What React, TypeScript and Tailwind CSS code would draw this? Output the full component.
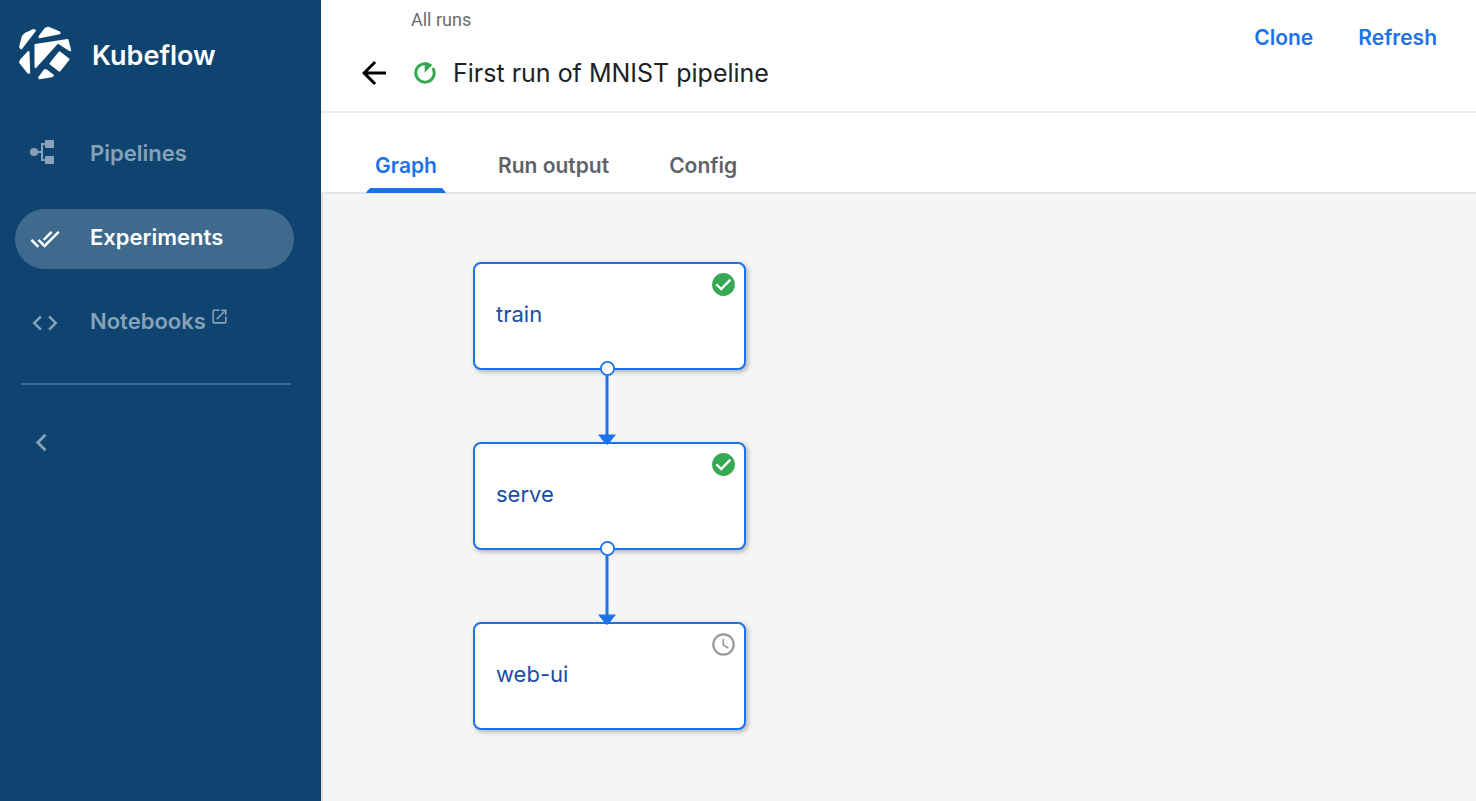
import React from "react";
import type { ReactNode } from "react";
import { MdArrowBack, MdChevronLeft, MdCode, MdDoneAll, MdOpenInNew } from "react-icons/md";

function Logo() {
  return (
    <svg
      className="h-[54px] w-[53px] fill-white stroke-white"
      viewBox="60 49 158 162"
      strokeWidth="6"
      strokeLinejoin="round"
      aria-hidden="true"
    >
      <path d="M63 112 L71 80 L78 73 L104 61 L107 63 L66 116 Z" />
      <path d="M121 81 L139 57 L147 54 L181 68 L181 71 L121 83 Z" />
      <path d="M109 106 L205 91 L213 122 L176 98 L109 172 Z" />
      <path d="M181 128 L208 149 L181 183 L154 162 Z" />
      <path d="M88 127 L90 189 L87 189 L63 158 L64 153 Z" />
      <path d="M136 182 L141 182 L161 197 L158 200 L121 206 L120 204 Z" />
    </svg>
  );
}

function PipelineIcon() {
  return (
    <svg className="h-6 w-6" viewBox="0 0 24 24" aria-hidden="true">
      <circle cx="4" cy="12" r="4" fill="currentColor" />
      <rect x="15" y="0" width="9" height="8" rx="0.6" fill="currentColor" />
      <rect x="15" y="16" width="9" height="8" rx="0.6" fill="currentColor" />
      <path d="M7 12 H12 M16 4 H12 V20 H16" fill="none" stroke="currentColor" strokeWidth="2" />
    </svg>
  );
}

function RunningIcon() {
  return (
    <svg className="h-[22px] w-[22px]" viewBox="0 0 22 22" role="img" aria-label="Running">
      <path d="M18.7 6 A9.2 9.2 0 1 1 14.6 2.5" fill="none" stroke="#34a853" strokeWidth="3" />
      <path d="M10.7 0.3 C13.6 0.3 16.2 1.2 18.3 3 L10.7 10.8 Z" fill="#34a853" />
    </svg>
  );
}

function DoneIcon() {
  return (
    <svg className="h-[23px] w-[23px]" viewBox="0 0 23 23" role="img" aria-label="Succeeded">
      <circle cx="11.5" cy="11.5" r="11.4" fill="#34a853" />
      <path d="M4.3 11.2 L9.2 16 L18.4 6.6" fill="none" stroke="#fff" strokeWidth="2.3" />
    </svg>
  );
}

function PendingIcon() {
  return (
    <svg className="h-[23px] w-[23px]" viewBox="0 0 23 23" fill="none" stroke="#9a9a9a" role="img" aria-label="Pending">
      <circle cx="11.5" cy="11.5" r="10.2" strokeWidth="2.2" />
      <path d="M11.3 5.8 V12 L16.3 15" strokeWidth="1.6" />
    </svg>
  );
}

function Connector() {
  return (
    <svg className="relative z-10 -mt-[9px] -mb-[3px] ml-[125px] h-[84px] w-[18px]" viewBox="0 0 18 84" aria-hidden="true">
      <path d="M9 15 V76" stroke="#1a73e8" strokeWidth="3" />
      <path d="M0 73.5 H18 L10.5 83 Q9 84.6 7.5 83 Z" fill="#1a73e8" />
      <circle cx="9.5" cy="7.5" r="6.6" fill="#fff" stroke="#1a73e8" strokeWidth="1.8" />
    </svg>
  );
}

function NavItem({ icon, active, children }: { icon: ReactNode; active?: boolean; children: ReactNode }) {
  return (
    <a
      href="#"
      aria-current={active ? "page" : undefined}
      className={
        active
          ? "flex h-[60px] items-center rounded-full bg-[#406a8d] pl-[15px] text-white"
          : "flex h-[60px] items-center rounded-full pl-[15px] text-[#87a1b7]"
      }
    >
      <span className="flex w-[30px] justify-center">{icon}</span>
      <span className="flex items-start gap-1 pb-1 pl-[30px] text-[22px] leading-7 font-semibold">{children}</span>
    </a>
  );
}

function Tab({ active, children }: { active?: boolean; children: ReactNode }) {
  return (
    <button
      type="button"
      role="tab"
      aria-selected={!!active}
      className={
        active
          ? "flex flex-col items-center text-[21px] leading-7 font-semibold text-[#1a73e8]"
          : "flex flex-col items-center text-[21px] leading-7 font-semibold text-[#5f6368]"
      }
    >
      <span className="px-2 pb-2">{children}</span>
      <svg
        className={active ? "h-[5px] w-full fill-[#1a73e8]" : "h-[5px] w-full fill-transparent"}
        viewBox="0 0 80 5"
        preserveAspectRatio="none"
        aria-hidden="true"
      >
        <path d="M0 5 Q1 3 4 0 H76 Q79 3 80 5 Z" />
      </svg>
    </button>
  );
}

const steps = [
  { name: "train", done: true },
  { name: "serve", done: true },
  { name: "web-ui", done: false },
];

export default function App() {
  return (
    <div className="flex min-h-screen bg-white font-['Inter',sans-serif]">
      <aside className="w-[321px] shrink-0 bg-[#0f4471]">
        <div className="flex items-center gap-5 pt-[26px] pl-[19px] text-white">
          <Logo />
          <span className="pt-[6px] text-[27px] leading-8 font-semibold">Kubeflow</span>
        </div>
        <nav className="flex flex-col gap-6 pt-[45px] pr-[27px] pl-[15px]">
          <NavItem
            icon={
              <span className="-ml-[6px] pb-[6px]">
                <PipelineIcon />
              </span>
            }
          >
            Pipelines
          </NavItem>
          <NavItem active icon={<MdDoneAll className="h-[30px] w-[30px]" />}>
            Experiments
          </NavItem>
          <NavItem icon={<MdCode className="h-[30px] w-[30px]" />}>
            Notebooks
            <MdOpenInNew className="h-[19px] w-[19px]" />
          </NavItem>
        </nav>
        <hr className="mt-[30px] mr-[30px] ml-[21px] border-t-2 border-[#3f6a8d]" />
        <button type="button" aria-label="Collapse navigation" className="mt-10 ml-6 block text-[#87a1b7]">
          <MdChevronLeft className="h-[35px] w-[35px]" />
        </button>
      </aside>

      <div className="flex min-w-0 grow flex-col">
        <header className="flex h-[113px] justify-between border-b-2 border-[#ececec] pr-[39px] pl-[35px]">
          <div>
            <a href="#" className="block pt-2 pl-[55px] font-['Roboto',sans-serif] text-[18px] leading-6 text-[#696d71]">
              All runs
            </a>
            <div className="flex items-center pt-[23px]">
              <button type="button" aria-label="Back" className="text-black">
                <MdArrowBack className="h-[36px] w-[36px]" />
              </button>
              <span className="pr-[17px] pl-[22px]">
                <RunningIcon />
              </span>
              <h1 className="text-[25px] leading-8 text-[#202124]">First run of MNIST pipeline</h1>
            </div>
          </div>
          <div className="flex items-start gap-[45px] pt-6 text-[21px] leading-7 font-semibold text-[#1a73e8]">
            <button type="button">Clone</button>
            <button type="button">Refresh</button>
          </div>
        </header>

        <div className="flex h-[81px] items-end border-b-2 border-[#e6e6e6] pl-[45px]">
          <div role="tablist" className="-mb-px flex gap-11">
            <Tab active>Graph</Tab>
            <Tab>Run output</Tab>
            <Tab>Config</Tab>
          </div>
        </div>

        <main className="grow border-l-2 border-[#dedede] bg-[#f5f5f5] pt-[68px] pb-[71px] pl-[150px]">
          {steps.map((step, i) => (
            <div key={step.name}>
              <section className="flex h-[108px] w-[273px] items-center justify-between rounded-lg border-2 border-[#1a73e8] bg-white pr-[9px] pl-[21px] shadow-[2px_2px_5px_rgba(0,0,0,0.28)]">
                <h2 className="pb-1 text-[22px] leading-7 text-[#174ea6]">{step.name}</h2>
                <div className="self-start pt-[9px]">{step.done ? <DoneIcon /> : <PendingIcon />}</div>
              </section>
              {i < steps.length - 1 && <Connector />}
            </div>
          ))}
        </main>
      </div>
    </div>
  );
}
